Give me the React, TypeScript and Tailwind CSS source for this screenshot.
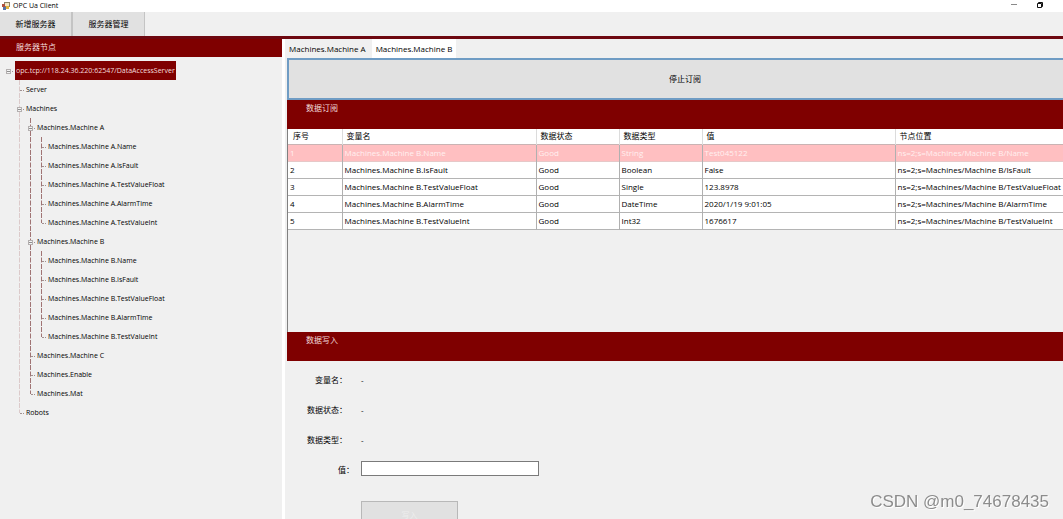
import React from 'react';

interface TreeNode {
  label: string;
  children?: TreeNode[];
}

interface Variable {
  name: string;
  status: string;
  type: string;
  value: string;
  nodeId: string;
}

const machineNodes = (machine: string): TreeNode[] =>
  ['Name', 'IsFault', 'TestValueFloat', 'AlarmTime', 'TestValueInt'].map((field) => ({
    label: `Machines.Machine ${machine}.${field}`,
  }));

const serverTree: TreeNode = {
  label: 'opc.tcp://118.24.36.220:62547/DataAccessServer',
  children: [
    { label: 'Server' },
    {
      label: 'Machines',
      children: [
        { label: 'Machines.Machine A', children: machineNodes('A') },
        { label: 'Machines.Machine B', children: machineNodes('B') },
        { label: 'Machines.Machine C' },
        { label: 'Machines.Enable' },
        { label: 'Machines.Mat' },
      ],
    },
    { label: 'Robots' },
  ],
};

const variables: Variable[] = [
  { name: 'Machines.Machine B.Name', status: 'Good', type: 'String', value: 'Test045122', nodeId: 'ns=2;s=Machines/Machine B/Name' },
  { name: 'Machines.Machine B.IsFault', status: 'Good', type: 'Boolean', value: 'False', nodeId: 'ns=2;s=Machines/Machine B/IsFault' },
  { name: 'Machines.Machine B.TestValueFloat', status: 'Good', type: 'Single', value: '123.8978', nodeId: 'ns=2;s=Machines/Machine B/TestValueFloat' },
  { name: 'Machines.Machine B.AlarmTime', status: 'Good', type: 'DateTime', value: '2020/1/19 9:01:05', nodeId: 'ns=2;s=Machines/Machine B/AlarmTime' },
  { name: 'Machines.Machine B.TestValueInt', status: 'Good', type: 'Int32', value: '1676617', nodeId: 'ns=2;s=Machines/Machine B/TestValueInt' },
];

// Outer guide is fainter than the inner ones
const guideColor = (level: number) => (level <= 1 ? '#dccaca' : '#a07474');

const Guide: React.FC<{ level: number; visible: boolean }> = ({ level, visible }) => (
  <svg className="h-[19px] w-[11px] shrink-0" viewBox="0 0 11 19" aria-hidden="true">
    {visible && <path d="M5.5 0V19" stroke={guideColor(level)} strokeDasharray="5 1.5" />}
  </svg>
);

const Connector: React.FC<{ level: number; last: boolean; expanded: boolean }> = ({ level, last, expanded }) => (
  <svg className="h-[19px] w-[11px] shrink-0" viewBox="0 0 11 19" fill="none" aria-hidden="true">
    {level > 0 && <path d={last ? 'M5.5 0V10' : 'M5.5 0V19'} stroke={guideColor(level)} strokeDasharray="5 1.5" />}
    <path d="M6 10.5H10" stroke="#a09090" strokeDasharray="2 1" />
    {expanded && (
      <>
        <rect x="3.5" y="8.5" width="4" height="4" fill="#f4f4f4" stroke="#b4b0b0" />
        <path d="M4 10.5H7" stroke="#909090" />
      </>
    )}
  </svg>
);

interface TreeItemProps {
  node: TreeNode;
  level: number;
  last: boolean;
  guides: boolean[];
}

const TreeItem: React.FC<TreeItemProps> = ({ node, level, last, guides }) => (
  <li role="treeitem" aria-expanded={node.children ? true : undefined} aria-selected={level === 0}>
    <div className="flex h-[19px]">
      {guides.map((visible, i) => (
        <Guide key={i} level={i} visible={visible} />
      ))}
      <Connector level={level} last={last} expanded={!!node.children} />
      <span className={level === 0 ? 'ml-px bg-[#7f0000] px-px leading-[19px] text-[#f3dede]' : 'px-px leading-[19px]'}>
        {node.label}
      </span>
    </div>
    {node.children && (
      <ul role="group">
        {node.children.map((child, i) => (
          <TreeItem
            key={child.label}
            node={child}
            level={level + 1}
            last={i === node.children!.length - 1}
            guides={[...guides, level > 0 && !last]}
          />
        ))}
      </ul>
    )}
  </li>
);

const TitleBar = () => (
  <div className="flex h-3 shrink-0 items-center bg-white pr-5 pl-[2px]">
    <svg className="h-2 w-2" viewBox="0 0 8 8" aria-hidden="true">
      <rect x="2.5" y="0.5" width="5" height="4" fill="#f3e6c4" stroke="#8d8468" />
      <rect x="0" y="2" width="3" height="3" fill="#b0503c" />
      <rect x="1" y="5" width="3" height="3" fill="#5573a8" />
      <rect x="4" y="4" width="3" height="3" fill="#e0b23c" />
    </svg>
    <h1 className="ml-[3px] flex-1 text-[7px] leading-[10px]">OPC Ua Client</h1>
    <button aria-label="Minimize" className="mr-5 flex h-2 w-[6px] items-center">
      <svg className="h-2 w-[6px]" viewBox="0 0 6 8" aria-hidden="true">
        <path d="M0 2.5H6" stroke="#8a8a8a" />
      </svg>
    </button>
    <button aria-label="Restore" className="flex h-2 w-[6px] items-start">
      <svg className="h-[6px] w-[6px]" viewBox="0 0 6 6" fill="none" aria-hidden="true">
        <path d="M0.5 1.5H4.5V5.5H0.5ZM1.5 1.5V0.5H5.5V4.5H4.5" stroke="#111" />
      </svg>
    </button>
  </div>
);

const SectionHeader: React.FC<{ title: string }> = ({ title }) => (
  <h2 className="h-[29px] shrink-0 bg-[#7f0000] pl-[19px] leading-4 text-[#f0dada]">{title}</h2>
);

const SubscriptionTable = () => (
  <table className="w-full min-w-[795px] table-fixed border-collapse bg-white text-left">
    <colgroup>
      <col className="w-[54px]" />
      <col className="w-[194px]" />
      <col className="w-[83px]" />
      <col className="w-[83px]" />
      <col className="w-[193px]" />
      <col />
    </colgroup>
    <thead>
      <tr className="h-[15px] border-b border-[#c9b3b3]">
        {['序号', '变量名', '数据状态', '数据类型', '值', '节点位置'].map((title) => (
          <th key={title} className="border-l border-[#dcdcdc] p-0 pl-1 leading-[14px] font-normal first:border-l-0 first:pl-[5px]">
            {title}
          </th>
        ))}
      </tr>
    </thead>
    <tbody>
      {variables.map((v, i) => (
        <tr
          key={v.nodeId}
          className={i === 0 ? 'h-[17px] border-b border-[#e6c8c8] bg-[#ffbfc1] text-[#fff0f0]' : 'h-[17px] border-b border-[#b4b4b4]'}
        >
          {[String(i + 1), v.name, v.status, v.type, v.value, v.nodeId].map((cell, c) => (
            <td key={c} className="overflow-hidden border-l border-[#b0b0b0] p-0 pl-[2px] leading-4 whitespace-nowrap first:border-l-0">
              {cell}
            </td>
          ))}
        </tr>
      ))}
    </tbody>
  </table>
);

const WriteForm = () => (
  <form className="pt-1" onSubmit={(e) => e.preventDefault()}>
    <dl>
      {['变量名', '数据状态', '数据类型'].map((label) => (
        <div key={label} className="flex h-[30px] items-center gap-[14px]">
          <dt className="w-[60px] text-right">{label}：</dt>
          <dd>-</dd>
        </div>
      ))}
    </dl>
    <div className="flex h-[30px] items-center gap-[7px]">
      <label htmlFor="write-value" className="w-[67px] text-right">
        值：
      </label>
      <input id="write-value" type="text" className="mb-1 h-[15px] w-[178px] border border-[#7a7a7a] bg-white px-1" />
    </div>
    <button
      type="submit"
      disabled
      className="mt-4 ml-[74px] h-7 w-[97px] border border-[#b8b8b8] bg-[#e1e1e1] text-[#eeeeee]"
    >
      写入
    </button>
  </form>
);

export default function App() {
  return (
    <div className="flex h-screen flex-col overflow-hidden bg-[#f0f0f0] font-['Open_Sans','Noto_Sans_CJK_SC',sans-serif] text-[8px] text-black">
      <TitleBar />
      <nav className="flex h-6 shrink-0">
        {['新增服务器', '服务器管理'].map((label) => (
          <button key={label} className="w-[73px] border-r-2 border-[#c4c4c4] bg-[#e1e1e1] last:w-[72px] last:border-r">
            {label}
          </button>
        ))}
      </nav>
      <div className="flex min-h-0 flex-1 border-t-[3px] border-[#6e0810]">
        <aside className="w-[282px] shrink-0">
          <h2 className="h-[18px] bg-[#7f0000] pl-4 leading-4 text-[#f3dede]">服务器节点</h2>
          <ul role="tree" className="pt-1 pl-[3px] text-[7px]">
            <TreeItem node={serverTree} level={0} last guides={[]} />
          </ul>
        </aside>
        <main className="flex min-w-0 flex-1 flex-col border-l-[3px] border-white">
          {/* Content runs past the right edge of the window */}
          <div className="-mr-5 flex min-h-0 flex-1 flex-col pl-[2px]">
            <div role="tablist" className="flex h-[19px] shrink-0 items-end">
              <button role="tab" aria-selected={false} className="h-[18px] pr-[6px] pl-[2px]">
                Machines.Machine A
              </button>
              <button role="tab" aria-selected className="h-[19px] bg-white px-1">
                Machines.Machine B
              </button>
            </div>
            <button className="h-[42px] shrink-0 border-2 border-[#6f9cc4] bg-[#e1e1e1]">停止订阅</button>
            <SectionHeader title="数据订阅" />
            <div className="h-[203px] shrink-0 border-l border-[#808080]">
              <SubscriptionTable />
            </div>
            <SectionHeader title="数据写入" />
            <WriteForm />
          </div>
        </main>
      </div>
      <p className="fixed right-[14px] bottom-[7px] font-['Liberation_Sans',sans-serif] text-[17px] leading-5 text-[#8c8c8c] [text-shadow:1px_1px_0_#ffffff]">
        CSDN @m0_74678435
      </p>
    </div>
  );
}
